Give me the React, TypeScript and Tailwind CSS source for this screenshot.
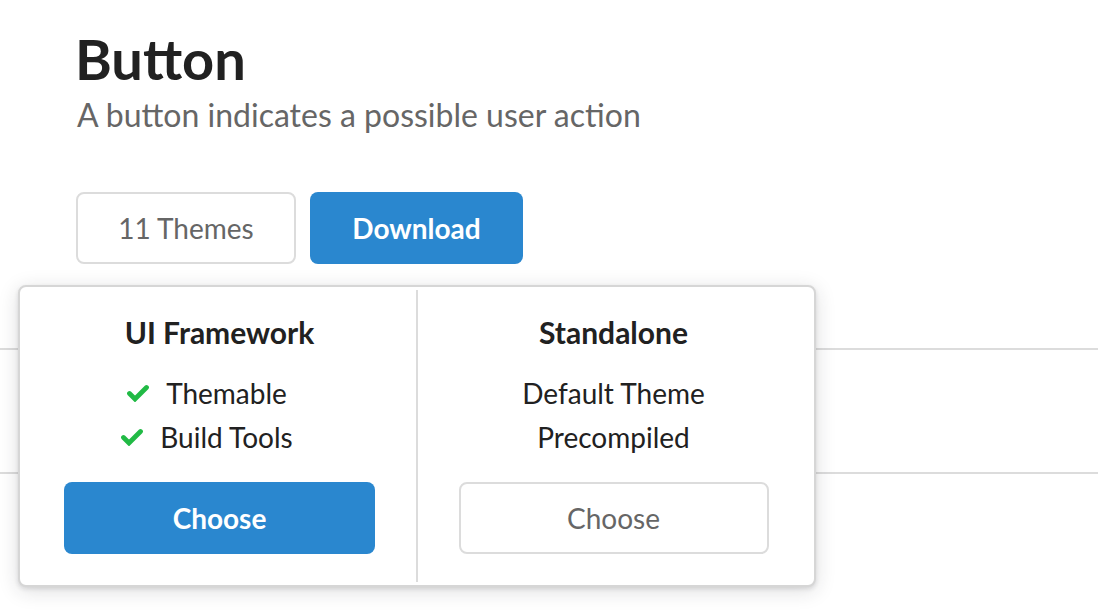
import React from "react";

function Check() {
  return (
    <svg width="24" height="18" viewBox="0 0 24 18" className="shrink-0">
      <path
        d="M3.5 9.5 L9 15 L20.5 3.5"
        fill="none"
        stroke="#21ba45"
        strokeWidth="4.8"
        strokeLinecap="round"
        strokeLinejoin="miter"
      />
    </svg>
  );
}

export default function App() {
  return (
    <div className="relative w-[1098px] h-[612px] overflow-hidden bg-white font-['Lato','Noto_Sans',sans-serif]">
      <div className="pl-[77px] pt-[31px]">
        <h1 className="-ml-[2px] text-[56px] font-bold leading-none text-[#212121]">Button</h1>
        <p className="mt-[12px] text-[32px] leading-none text-[#666666]">
          A button indicates a possible user action
        </p>
        <div className="mt-[61px] flex gap-[14px] -ml-px">
          <button className="flex h-[72px] w-[220px] items-center justify-center rounded-[8px] border-2 border-[#dcdcdc] bg-white text-[28px] text-[#666666]">
            11 Themes
          </button>
          <button className="flex h-[72px] w-[213px] items-center justify-center rounded-[8px] bg-[#2a87cf] text-[28px] font-bold text-white">
            Download
          </button>
        </div>
      </div>
      <div className="mt-[84px] h-[126px] border-y-2 border-[#dcdcdc]" />

      <div className="absolute left-[18px] top-[285px] flex h-[302px] w-[798px] rounded-[8px] border-2 border-[#d6d6d6] bg-white py-[3px] shadow-[0_2px_4px_rgba(34,36,38,0.12),0_4px_20px_rgba(34,36,38,0.15)]">
        <div className="flex w-[396px] flex-col items-center pl-[3px] pt-[27px]">
          <div className="text-[30px] font-bold leading-none text-[#212121]">UI Framework</div>
          <div className="mt-[24px] flex flex-col items-center text-[28px] leading-[44px] text-[#212121]">
            <div className="flex items-center gap-[16px] pr-[26px]">
              <Check />
              <span>Themable</span>
            </div>
            <div className="flex items-center gap-[16px] pr-[26px]">
              <Check />
              <span>Build Tools</span>
            </div>
          </div>
          <button className="mt-[23px] flex h-[72px] w-[311px] items-center justify-center rounded-[8px] bg-[#2a87cf] text-[28px] font-bold text-white">
            Choose
          </button>
        </div>
        <div className="flex flex-1 flex-col items-center border-l-2 border-[#dcdcdc] pr-[5px] pt-[27px]">
          <div className="text-[30px] font-bold leading-none text-[#212121]">Standalone</div>
          <div className="mt-[24px] flex flex-col items-center text-[28px] leading-[44px] text-[#212121]">
            <div>Default Theme</div>
            <div>Precompiled</div>
          </div>
          <button className="mt-[23px] flex h-[72px] w-[310px] items-center justify-center rounded-[8px] border-2 border-[#dcdcdc] bg-white text-[28px] text-[#666666]">
            Choose
          </button>
        </div>
      </div>
    </div>
  );
}
